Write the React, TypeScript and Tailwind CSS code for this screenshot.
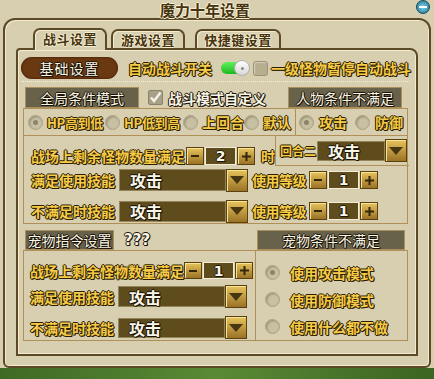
const yellowText =
  "text-[#f6cb48] [text-shadow:1px_0_0_#2b1e00,-1px_0_0_#2b1e00,0_1px_0_#2b1e00,0_-1px_0_#2b1e00,1px_1px_0_#2b1e00]";
const whiteText =
  "text-[#f8f4e6] [text-shadow:1px_0_0_#1c1406,-1px_0_0_#1c1406,0_1px_0_#1c1406,0_-1px_0_#1c1406,1px_1px_0_#1c1406]";
const darkText =
  "text-[#45340f] [text-shadow:1px_0_0_#f6eed4,-1px_0_0_#f6eed4,0_1px_0_#f6eed4,0_-1px_0_#f6eed4]";

const Radio = ({ on }: { on?: boolean }) => (
  <span className="w-[15px] h-[15px] shrink-0 rounded-full bg-[#c8c0a2] border border-[#aba287] shadow-[inset_1px_1px_2px_rgba(60,50,20,0.35)] flex items-center justify-center">
    {on && <span className="w-[5px] h-[5px] rounded-full bg-[#8c846a]" />}
  </span>
);

const GoldBtn = ({ w, h, children }: { w: string; h: string; children: React.ReactNode }) => (
  <span
    className={`${w} ${h} shrink-0 flex items-center justify-center bg-linear-to-b from-[#e8c45c] to-[#9a7326] border border-[#5a4210] shadow-[inset_1px_1px_0_#f7e39a]`}
  >
    {children}
  </span>
);

const Minus = () => <span className="w-[8px] h-[2px] bg-[#35260a]" />;
const Plus = () => (
  <svg width="9" height="9" viewBox="0 0 9 9">
    <rect x="0" y="3.5" width="9" height="2" fill="#35260a" />
    <rect x="3.5" y="0" width="2" height="9" fill="#35260a" />
  </svg>
);

const Stepper = ({ value, h }: { value: string; h: string }) => (
  <div className={`flex items-stretch gap-[1px] shrink-0 ${h}`}>
    <GoldBtn w="w-[18px]" h="h-full">
      <Minus />
    </GoldBtn>
    <span
      className={`w-[31px] flex items-center justify-center bg-[#5e4c1c] border border-[#f2ecd8] text-[14px] font-bold font-['DejaVu_Sans',sans-serif] ${whiteText}`}
    >
      {value}
    </span>
    <GoldBtn w="w-[18px]" h="h-full">
      <Plus />
    </GoldBtn>
  </div>
);

const Arrow = () => (
  <span className="w-0 h-0 border-l-[7px] border-r-[7px] border-t-[8px] border-l-transparent border-r-transparent border-t-[#463710]" />
);

const Select = ({ w, h }: { w: string; h: string }) => (
  <div className="flex items-center shrink-0">
    <span
      className={`${w} ${h} flex items-center pl-[10px] bg-[#5e4c1c] border border-[#938459] text-[16px] font-bold ${whiteText}`}
    >
      攻击
    </span>
    <GoldBtn w="w-[22px]" h="h-[23px]">
      <Arrow />
    </GoldBtn>
  </div>
);

const Header = ({ w, children }: { w: string; children: React.ReactNode }) => (
  <span
    className={`${w} h-full shrink-0 flex items-center justify-center bg-[#68624b] border border-[#a88f5c] text-[14px] ${whiteText}`}
  >
    {children}
  </span>
);

const Tab = ({ label, active, w, ml }: { label: string; active?: boolean; w: string; ml: string }) => (
  <div
    className={`${w} ${ml} ${
      active ? "h-[22px] -mb-[2px] relative z-10" : "h-[19px]"
    } shrink-0 border-2 border-b-0 border-[#5c4a26] rounded-t-[7px] bg-[#d8cfb0] shadow-[inset_1px_1px_0_#f4ecd0] flex items-start justify-center pt-[2px] text-[13px] font-bold tracking-[0.5px] ${darkText}`}
  >
    {label}
  </div>
);

export default function App() {
  return (
    <div className="w-[434px] h-[379px] relative overflow-hidden bg-[#d8cfb0] font-['Noto_Sans_CJK_SC','Noto_Sans',sans-serif] leading-none whitespace-nowrap select-none">
      {/* title */}
      <div className="h-[18px] flex items-end justify-center pr-[24px] pb-[1px]">
        <span className={`text-[15px] font-bold ${darkText}`}>魔力十年设置</span>
      </div>
      <span className="absolute right-[4px] top-0 w-[14px] h-[14px] rounded-full bg-radial from-[#7fd4ee] to-[#13708e] border border-[#0d4a5e] flex items-center justify-center">
        <span className="w-[8px] h-[2px] bg-white" />
      </span>

      {/* outer panel */}
      <div className="ml-[3px] w-[428px] h-[350px] border-2 border-[#5c4a26] rounded-t-[12px] rounded-b-[6px] shadow-[inset_1px_1px_0_#f3ead0,inset_-1px_-1px_0_#f3ead0]">
        <div className="h-[28px] flex items-end pl-[28px]">
          <Tab label="战斗设置" active w="w-[74px]" ml="ml-0" />
          <Tab label="游戏设置" w="w-[74px]" ml="ml-[4px]" />
          <Tab label="快捷键设置" w="w-[86px]" ml="ml-[10px]" />
        </div>

        <div className="ml-[11px] w-[402px] h-[308px] border-2 border-[#5c4a26] rounded-tr-[8px] rounded-tl-[4px] shadow-[inset_1px_1px_0_#f3ead0,inset_-1px_-1px_0_#f3ead0]">
          {/* row 1 */}
          <div className="mt-[7px] pl-[3px] h-[22px] flex items-center">
            <span
              className={`w-[97px] h-[22px] shrink-0 rounded-full bg-[#6b3911] shadow-[inset_0_0_3px_#3a1c04] flex items-center justify-center text-[14px] tracking-[1px] ${whiteText}`}
            >
              基础设置
            </span>
            <span className={`ml-[10px] text-[14px] font-bold ${yellowText}`}>自动战斗开关</span>
            <span className="ml-[9px] relative w-[29px] h-[16px] shrink-0 flex items-center">
              <span className="w-[26px] h-[12px] rounded-full bg-linear-to-b from-[#5cf05a] to-[#18b820]" />
              <span className="absolute right-0 top-0 w-[16px] h-[16px] rounded-full bg-linear-to-b from-white to-[#d8d8d8] border border-[#b0b0b0] flex items-center justify-center">
                <span className="w-[3px] h-[3px] rounded-full bg-[#888]" />
              </span>
            </span>
            <span className="ml-[3px] w-[15px] h-[15px] shrink-0 rounded-[3px] bg-[#b7ae90] border border-[#9c937a] shadow-[inset_1px_1px_1px_rgba(255,255,255,0.4)]" />
            <span className={`ml-[3px] text-[14px] font-bold ${yellowText}`}>一级怪物暂停自动战斗</span>
          </div>
          <div className="ml-[4px] w-[388px] mt-[2px] border-b border-dotted border-[#f6f0de]" />

          <div className="ml-[5px] w-[385px]">
            {/* global header row */}
            <div className="mt-[5px] h-[21px] flex items-center">
              <span className="ml-[2px] h-full flex">
                <Header w="w-[114px]">全局条件模式</Header>
              </span>
              <span className="ml-[9px] w-[15px] h-[15px] shrink-0 rounded-[2px] bg-[#a8a186] border border-[#8a836a] flex items-center justify-center">
                <svg width="13" height="13" viewBox="0 0 13 13">
                  <path d="M2 6.5 L5 10 L11.5 1.5" stroke="#f4f2ea" strokeWidth="2.4" fill="none" />
                </svg>
              </span>
              <span className={`ml-[5px] text-[14px] font-bold ${whiteText}`}>战斗模式自定义</span>
              <span className="ml-auto mr-[6px] h-full flex">
                <Header w="w-[114px]">人物条件不满足</Header>
              </span>
            </div>

            {/* big box */}
            <div className="h-[116px] border border-[#b08f58]">
              <div className="h-[27px] flex border-b border-[#b08f58]">
                <div className={`w-[272px] shrink-0 border-r border-[#b08f58] flex items-center pl-[4px] text-[14px] font-bold ${yellowText}`}>
                  <span className="w-[77px] shrink-0 flex items-center gap-[4px]">
                    <Radio on />
                    <span className="text-[13px] tracking-[-0.3px]">HP高到低</span>
                  </span>
                  <span className="w-[78px] shrink-0 flex items-center gap-[4px]">
                    <Radio />
                    <span className="text-[13px] tracking-[-0.3px]">HP低到高</span>
                  </span>
                  <span className="w-[61px] shrink-0 flex items-center gap-[4px]">
                    <Radio />
                    <span>上回合</span>
                  </span>
                  <span className="flex items-center gap-[4px]">
                    <Radio />
                    <span>默认</span>
                  </span>
                </div>
                <div className={`flex items-center pl-[3px] text-[14px] font-bold ${yellowText}`}>
                  <span className="w-[56px] shrink-0 flex items-center gap-[5px]">
                    <Radio on />
                    <span>攻击</span>
                  </span>
                  <span className="flex items-center gap-[5px]">
                    <Radio />
                    <span>防御</span>
                  </span>
                </div>
              </div>

              <div className="h-[30px] flex">
                <div className={`mt-[11px] h-[18px] pl-[7px] flex items-center text-[14px] font-bold ${yellowText}`}>
                  <span className="w-[154px] shrink-0">战场上剩余怪物数量满足</span>
                  <span className="ml-[1px]">
                    <Stepper value="2" h="h-[18px]" />
                  </span>
                  <span className="ml-[6px]">时</span>
                </div>
                <div className="ml-auto w-[134px] shrink-0 h-[30px] border-l border-b border-[#b08f58] flex items-center pl-[4px]">
                  <span className={`text-[12px] font-bold w-[37px] shrink-0 ${yellowText}`}>回合二</span>
                  <Select w="w-[68px]" h="h-[20px]" />
                </div>
              </div>

              <div className={`mt-[3px] h-[22px] pl-[7px] flex items-center text-[14px] font-bold ${yellowText}`}>
                <span className="w-[88px] shrink-0">满足使用技能</span>
                <Select w="w-[107px]" h="h-[22px]" />
                <span className="ml-[4px] w-[53px] shrink-0 tracking-[-0.5px]">使用等级</span>
                <span className="ml-[4px]">
                  <Stepper value="1" h="h-[18px]" />
                </span>
              </div>
              <div className={`mt-[9px] h-[22px] pl-[7px] flex items-center text-[14px] font-bold ${yellowText}`}>
                <span className="w-[88px] shrink-0">不满足时技能</span>
                <Select w="w-[107px]" h="h-[21px]" />
                <span className="ml-[4px] w-[53px] shrink-0 tracking-[-0.5px]">使用等级</span>
                <span className="ml-[4px]">
                  <Stepper value="1" h="h-[18px]" />
                </span>
              </div>
            </div>

            {/* pet header row */}
            <div className="mt-[6px] h-[20px] flex items-center">
              <span className="ml-[2px] h-full flex">
                <Header w="w-[89px]">宠物指令设置</Header>
              </span>
              <span className={`ml-[10px] text-[15px] font-bold font-['DejaVu_Sans',sans-serif] ${whiteText}`}>???</span>
              <span className="ml-auto mr-[3px] h-full flex">
                <Header w="w-[148px]">宠物条件不满足</Header>
              </span>
            </div>

            {/* lower box */}
            <div className="h-[91px] flex border border-[#b08f58]">
              <div className={`w-[232px] shrink-0 border-r border-[#b08f58] pl-[6px] text-[14px] font-bold ${yellowText}`}>
                <div className="mt-[11px] h-[17px] flex items-center">
                  <span className="w-[154px] shrink-0">战场上剩余怪物数量满足</span>
                  <Stepper value="1" h="h-[17px]" />
                </div>
                <div className="mt-[7px] h-[21px] flex items-center">
                  <span className="w-[88px] shrink-0">满足使用技能</span>
                  <Select w="w-[107px]" h="h-[21px]" />
                </div>
                <div className="mt-[10px] h-[21px] flex items-center">
                  <span className="w-[88px] shrink-0">不满足时技能</span>
                  <Select w="w-[107px]" h="h-[20px]" />
                </div>
              </div>
              <div className={`pl-[9px] pt-[14px] flex flex-col gap-[12px] text-[14px] font-bold ${yellowText}`}>
                <span className="flex items-center gap-[10px]">
                  <Radio on />
                  <span>使用攻击模式</span>
                </span>
                <span className="flex items-center gap-[10px]">
                  <Radio />
                  <span>使用防御模式</span>
                </span>
                <span className="flex items-center gap-[10px]">
                  <Radio />
                  <span>使用什么都不做</span>
                </span>
              </div>
            </div>
          </div>
        </div>
      </div>

      {/* game background peeking below */}
      <div className="h-[11px] bg-linear-to-r from-[#3f6a25] via-[#5a8a35] to-[#3c6422]" />
    </div>
  );
}
